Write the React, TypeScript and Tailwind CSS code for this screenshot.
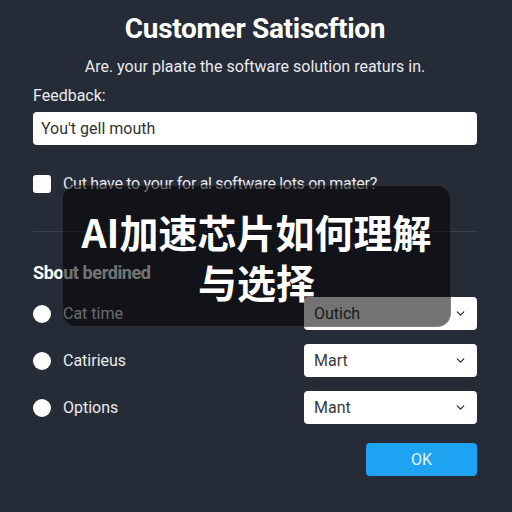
import { ChevronDown } from 'lucide-react'

const options = [
  { label: 'Cat time', value: 'Outich' },
  { label: 'Catirieus', value: 'Mart' },
  { label: 'Options', value: 'Mant' },
]

function Select({ value }: { value: string }) {
  return (
    <div className="flex h-[33px] w-[173px] items-center justify-between rounded-[4px] bg-white pl-[10px] pr-[10px] text-[16px] text-[#3a3a3a]">
      <span>{value}</span>
      <ChevronDown size={13} strokeWidth={2.5} className="text-[#333]" />
    </div>
  )
}

export default function App() {
  return (
    <div className="relative h-[512px] w-[512px] overflow-hidden bg-[#262b38] font-['Roboto','Liberation_Sans',sans-serif] text-[#e8eaee]">
      <div className="flex flex-col px-[33px] pt-[13px] pr-[35px]">
        <h1 className="text-center text-[28px] font-bold leading-[32px] tracking-[-0.3px] text-white">
          Customer Satiscftion
        </h1>
        <p className="mt-[12px] text-center text-[16px] leading-[20px]">
          Are. your plaate the software solution reaturs in.
        </p>
        <label className="mt-[9px] text-[16px] leading-[20px]">Feedback:</label>
        <div className="mt-[6px] flex h-[33px] items-center rounded-[4px] bg-white px-[8px] text-[16px] text-[#333]">
          You't gell mouth
        </div>
        <div className="mt-[29px] flex items-center gap-[12px]">
          <div className="h-[18px] w-[18px] rounded-[3px] bg-white" />
          <span className="text-[16px] leading-[20px] tracking-[-0.3px]">
            Cut have to your for al software lots on mater?
          </span>
        </div>
        <div className="mt-[37px] h-px bg-white/10" />
        <h2 className="mt-[31px] text-[18px] font-bold leading-[20px] tracking-[-0.4px] text-white">
          Sbout berdined
        </h2>
        <div className="mt-[14px] flex flex-col gap-[14px]">
          {options.map((o) => (
            <div key={o.label} className="flex items-center justify-between">
              <div className="flex items-center gap-[12px]">
                <div className="h-[18px] w-[18px] rounded-full bg-white" />
                <span className="text-[16px]">{o.label}</span>
              </div>
              <Select value={o.value} />
            </div>
          ))}
        </div>
        <div className="mt-[19px] flex justify-end">
          <button className="h-[33px] w-[111px] rounded-[4px] bg-[#1ea3f3] text-[16px] text-[#e6f6ff]">
            OK
          </button>
        </div>
      </div>

      <div className="absolute left-[62px] top-[185px] flex h-[142px] w-[389px] flex-col items-center justify-center rounded-[14px] border border-white/10 bg-black/55 font-['Noto_Sans_CJK_SC',sans-serif] text-[39px] font-bold leading-[50px] text-white">
        <span>AI加速芯片如何理解</span>
        <span>与选择</span>
      </div>
    </div>
  )
}
